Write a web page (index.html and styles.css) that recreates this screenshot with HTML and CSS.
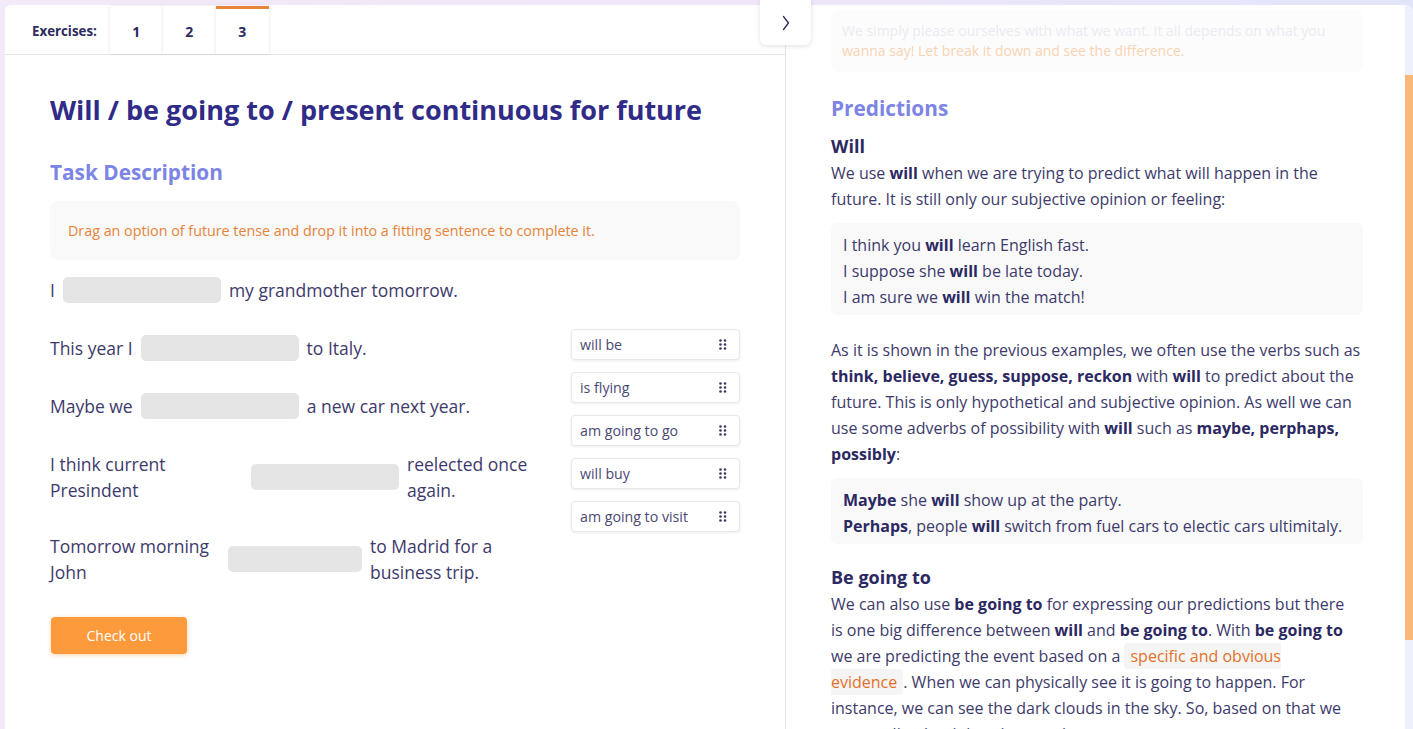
FILE: index.html
```html
<!DOCTYPE html>
<html lang="en">
<head>
<meta charset="utf-8">
<title>Will / be going to / present continuous for future</title>
<link rel="stylesheet" href="styles.css">
</head>
<body>
<div class="app">
  <section class="left">
    <nav class="tabs">
      <span class="tabs-label">Exercises:</span>
      <button class="tab">1</button>
      <button class="tab">2</button>
      <button class="tab active">3</button>
    </nav>
    <div class="left-body">
      <h1 class="title">Will / be going to / present continuous for future</h1>
      <h2 class="section-title">Task Description</h2>
      <div class="task">Drag an option of future tense and drop it into a fitting sentence to complete it.</div>
      <div class="exercise">
        <div class="sentences">
          <div class="row"><span>I</span><span class="blank"></span><span>my grandmother tomorrow.</span></div>
          <div class="row"><span>This year I</span><span class="blank"></span><span>to Italy.</span></div>
          <div class="row"><span>Maybe we</span><span class="blank"></span><span>a new car next year.</span></div>
          <div class="row"><span class="t4a">I think current Presindent</span><span class="blank b4"></span><span class="t4b">reelected once again.</span></div>
          <div class="row row5"><span class="t5a">Tomorrow morning John</span><span class="blank b5"></span><span class="t5b">to Madrid for a business trip.</span></div>
        </div>
        <div class="options">
          <div class="option"><span>will be</span><svg class="handle" width="8" height="11" viewBox="0 0 8 11"><circle cx="1.5" cy="1.5" r="1.3"/><circle cx="6" cy="1.5" r="1.3"/><circle cx="1.5" cy="5.5" r="1.3"/><circle cx="6" cy="5.5" r="1.3"/><circle cx="1.5" cy="9.5" r="1.3"/><circle cx="6" cy="9.5" r="1.3"/></svg></div>
          <div class="option"><span>is flying</span><svg class="handle" width="8" height="11" viewBox="0 0 8 11"><circle cx="1.5" cy="1.5" r="1.3"/><circle cx="6" cy="1.5" r="1.3"/><circle cx="1.5" cy="5.5" r="1.3"/><circle cx="6" cy="5.5" r="1.3"/><circle cx="1.5" cy="9.5" r="1.3"/><circle cx="6" cy="9.5" r="1.3"/></svg></div>
          <div class="option"><span>am going to go</span><svg class="handle" width="8" height="11" viewBox="0 0 8 11"><circle cx="1.5" cy="1.5" r="1.3"/><circle cx="6" cy="1.5" r="1.3"/><circle cx="1.5" cy="5.5" r="1.3"/><circle cx="6" cy="5.5" r="1.3"/><circle cx="1.5" cy="9.5" r="1.3"/><circle cx="6" cy="9.5" r="1.3"/></svg></div>
          <div class="option"><span>will buy</span><svg class="handle" width="8" height="11" viewBox="0 0 8 11"><circle cx="1.5" cy="1.5" r="1.3"/><circle cx="6" cy="1.5" r="1.3"/><circle cx="1.5" cy="5.5" r="1.3"/><circle cx="6" cy="5.5" r="1.3"/><circle cx="1.5" cy="9.5" r="1.3"/><circle cx="6" cy="9.5" r="1.3"/></svg></div>
          <div class="option"><span>am going to visit</span><svg class="handle" width="8" height="11" viewBox="0 0 8 11"><circle cx="1.5" cy="1.5" r="1.3"/><circle cx="6" cy="1.5" r="1.3"/><circle cx="1.5" cy="5.5" r="1.3"/><circle cx="6" cy="5.5" r="1.3"/><circle cx="1.5" cy="9.5" r="1.3"/><circle cx="6" cy="9.5" r="1.3"/></svg></div>
        </div>
      </div>
      <button class="check">Check out</button>
    </div>
  </section>
  <button class="toggle" aria-label="Toggle panel"><svg width="12" height="16" viewBox="0 0 12 16"><polyline points="3.5,1.5 8.5,8 3.5,14.5" fill="none" stroke="#2d2b5e" stroke-width="1.3" stroke-linejoin="round" stroke-linecap="round"/></svg></button>
  <section class="right">
    <div class="right-scroll">
      <div class="note">
        <div class="note-l1">We simply please ourselves with what we want. It all depends on what you</div>
        <div class="note-l2">wanna say! Let break it down and see the difference.</div>
      </div>
      <h2 class="section-title predictions">Predictions</h2>
      <h3 class="sub">Will</h3>
      <p class="para">We use <b>will</b> when we are trying to predict what will happen in the future. It is still only our subjective opinion or feeling:</p>
      <div class="example">
        <div>I think you <b>will</b> learn English fast.</div>
        <div>I suppose she <b>will</b> be late today.</div>
        <div>I am sure we <b>will</b> win the match!</div>
      </div>
      <p class="para para-gap">As it is shown in the previous examples, we often use the verbs such as <b>think, believe, guess, suppose, reckon</b> with <b>will</b> to predict about the future. This is only hypothetical and subjective opinion. As well we can use some adverbs of possibility with <b>will</b> such as <b>maybe, perphaps, possibly</b>:</p>
      <div class="example">
        <div><b>Maybe</b> she <b>will</b> show up at the party.</div>
        <div><b>Perhaps</b>, people <b>will</b> switch from fuel cars to electic cars ultimitaly.</div>
      </div>
      <h3 class="sub sub-gap">Be going to</h3>
      <p class="para para-narrow">We can also use <b>be going to</b> for expressing our predictions but there is one big difference between <b>will</b> and <b>be going to</b>. With <b>be going to</b> we are predicting the event based on a <span class="mark">specific and obvious evidence</span>. When we can physically see it is going to happen. For instance, we can see the dark clouds in the sky. So, based on that we can predict that it is going to rain soon.</p>
    </div>
    <div class="scrollbar"><div class="thumb"></div></div>
  </section>
</div>
</body>
</html>
```
FILE: styles.css
```css
* { box-sizing: border-box; }
html, body { height: 100%; }
body {
  margin: 0;
  font-family: "Open Sans", "Noto Sans", sans-serif;
  color: #3d3a6b;
  background: linear-gradient(90deg, #f3e9f8 0%, #f1e6f7 45%, #e3e5fb 100%);
  overflow: hidden;
}
.app {
  position: relative;
  display: flex;
  height: 100vh;
  padding: 5px 0 0 5px;
}
.left {
  width: 781px;
  flex: none;
  background: #fff;
  border-right: 1px solid #e6e6e6;
  border-top-left-radius: 6px;
}
.tabs {
  display: flex;
  align-items: flex-end;
  height: 50px;
  padding-left: 27px;
  border-bottom: 1px solid #e4e4e4;
}
.tabs-label {
  align-self: center;
  padding-top: 2px;
  padding-right: 13px;
  font-weight: 700;
  font-size: 13.3px;
  color: #2d2b5e;
}
.tab {
  width: 53px;
  height: 48px;
  border: none;
  border-top: 3px solid transparent;
  background: #fff;
  box-shadow: 0 0 3px rgba(0, 0, 0, 0.12);
  font-family: inherit;
  font-weight: 700;
  font-size: 14px;
  color: #2d2b5e;
  padding: 0;
}
.tab.active { border-top-color: #e8843c; }
.left-body { padding: 37px 45px 0 45px; }
.title {
  margin: 0;
  font-size: 27px;
  line-height: 36px;
  font-weight: 700;
  color: #2f2b87;
}
.section-title {
  margin: 29px 0 0;
  font-size: 20.8px;
  line-height: 30px;
  font-weight: 700;
  color: #7c84e4;
}
.task {
  margin-top: 14px;
  height: 59px;
  display: flex;
  align-items: center;
  padding: 0 18px;
  background: #f9f9f9;
  border-radius: 8px;
  font-size: 14.3px;
  color: #e5833a;
}
.exercise {
  margin-top: 17px;
  display: flex;
  align-items: center;
  gap: 31px;
}
.sentences {
  width: 490px;
  display: flex;
  flex-direction: column;
  gap: 32px;
}
.row {
  display: flex;
  align-items: center;
  gap: 8px;
  font-size: 17.5px;
  line-height: 26px;
}
.row5 { margin-top: -2px; }
.blank {
  flex: none;
  width: 158px;
  height: 26px;
  background: #e6e5e5;
  border-radius: 5px;
}
.t4a { width: 193px; flex: none; }
.b4 { width: 148px; }
.t4b { width: 133px; flex: none; }
.t5a { width: 170px; flex: none; }
.b5 { width: 134px; }
.t5b { width: 170px; flex: none; }
.options {
  width: 169px;
  flex: none;
  display: flex;
  flex-direction: column;
  gap: 12px;
  margin-top: -2px;
}
.option {
  height: 31px;
  display: flex;
  align-items: center;
  justify-content: space-between;
  padding: 0 12px 0 8px;
  background: #fff;
  border: 1px solid #e8e8e8;
  border-radius: 4px;
  box-shadow: 0 1px 3px rgba(0, 0, 0, 0.08);
  font-size: 14.2px;
  color: #4a4874;
}
.handle { fill: #3a3860; }
.check {
  margin-top: 32px;
  width: 136px;
  height: 37px;
  border: none;
  border-radius: 4px;
  background: #fd9a3c;
  box-shadow: 0 1px 4px rgba(253, 154, 60, 0.45);
  color: #fff;
  font-family: inherit;
  font-size: 14px;
  margin-left: 1px;
}
.toggle {
  position: absolute;
  left: 760px;
  top: 0;
  width: 51px;
  height: 45px;
  border: none;
  background: #fff;
  border-radius: 0 0 6px 6px;
  box-shadow: 0 1px 5px rgba(0, 0, 0, 0.12);
  display: flex;
  align-items: center;
  justify-content: center;
  padding: 0;
}
.right {
  flex: 1;
  display: flex;
  background: #fff;
  border-top-right-radius: 8px;
  overflow: hidden;
}
.right-scroll {
  flex: 1;
  padding: 5px 42px 0 45px;
  font-size: 16px;
  line-height: 26px;
}
.note {
  padding: 11px 11px;
  background: #fdfcfc;
  border-radius: 8px;
  font-size: 14px;
  line-height: 20px;
  white-space: nowrap;
  overflow: hidden;
}
.note-l1 { color: #ece9f2; }
.note-l2 { color: #f8d3b3; }
.predictions { margin-top: 21px; }
.sub {
  margin: 10px 0 0;
  font-size: 18px;
  line-height: 26px;
  font-weight: 700;
  color: #2b2862;
}
.sub-gap { margin-top: 20px; }
.para { margin: 1px 0 0; }
.para-gap { margin-top: 22px; }
.para-narrow { padding-right: 5px; }
b { font-weight: 700; color: #2b2862; }
.example {
  margin-top: 11px;
  padding: 9px 12px 5px;
  background: #f9f9fa;
  border-radius: 6px;
}
.mark {
  padding: 2px 6px;
  background: #f5f5f5;
  border-radius: 4px;
  color: #e3712a;
}
.scrollbar {
  width: 8px;
  flex: none;
  background: #eef0fb;
}
.thumb {
  margin-top: 70px;
  height: 565px;
  background: #f9b877;
}
```
